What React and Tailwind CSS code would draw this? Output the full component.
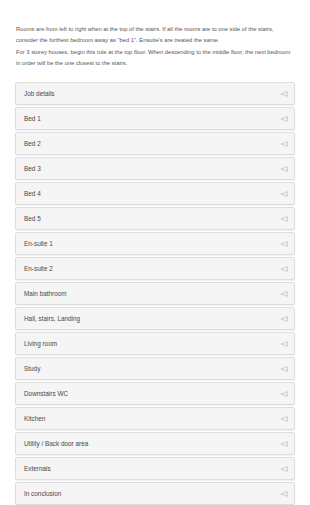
const rooms = [
    "Job details",
    "Bed 1",
    "Bed 2",
    "Bed 3",
    "Bed 4",
    "Bed 5",
    "En-suite 1",
    "En-suite 2",
    "Main bathroom",
    "Hall, stairs, Landing",
    "Living room",
    "Study",
    "Downstairs WC",
    "Kitchen",
    "Utility / Back door area",
    "Externals",
    "In conclusion",
]

function Arrow() {
    return (
        <svg width="8" height="6" viewBox="0 0 8 6" className="shrink-0">
            <path d="M7.5 0.6 L0.8 3 L7.5 5.4 Z" fill="#f0f0f0" stroke="#c8c8c8" strokeWidth="0.8" strokeLinejoin="round" />
        </svg>
    )
}

function App() {
    return (
        <div className="w-[310px] h-[505px] bg-white overflow-hidden font-['Liberation_Sans',Arial,sans-serif]">
            <div className="pt-[24px] pl-[16px] pr-[14px] text-[5.8px] leading-[10.5px] text-[#555]">
                <p className="mb-[2px]">
                    Rooms are from left to right when at the top of the stairs. If all the rooms are to one side of the stairs,
                    consider the furthest bedroom away as "bed 1". Ensuite's are treated the same.
                </p>
                <p>
                    For 3 storey houses, begin this rule at the top floor. When descending to the middle floor, the next bedroom
                    in order will be the one closest to the stairs.
                </p>
            </div>
            <div className="mt-[14px] ml-[15px] w-[280px] flex flex-col gap-[2px]">
                {rooms.map((room) => (
                    <div key={room}
                        className="h-[23px] flex items-center justify-between pl-[8px] pr-[6px] bg-[#f5f5f5] border border-[#dddddd] rounded-[2px] shadow-[0_1px_1px_rgba(0,0,0,0.06)]">
                        <span className="text-[6.4px] text-[#484848]">{room}</span>
                        <Arrow />
                    </div>
                ))}
            </div>
        </div>
    )
}

export default App
